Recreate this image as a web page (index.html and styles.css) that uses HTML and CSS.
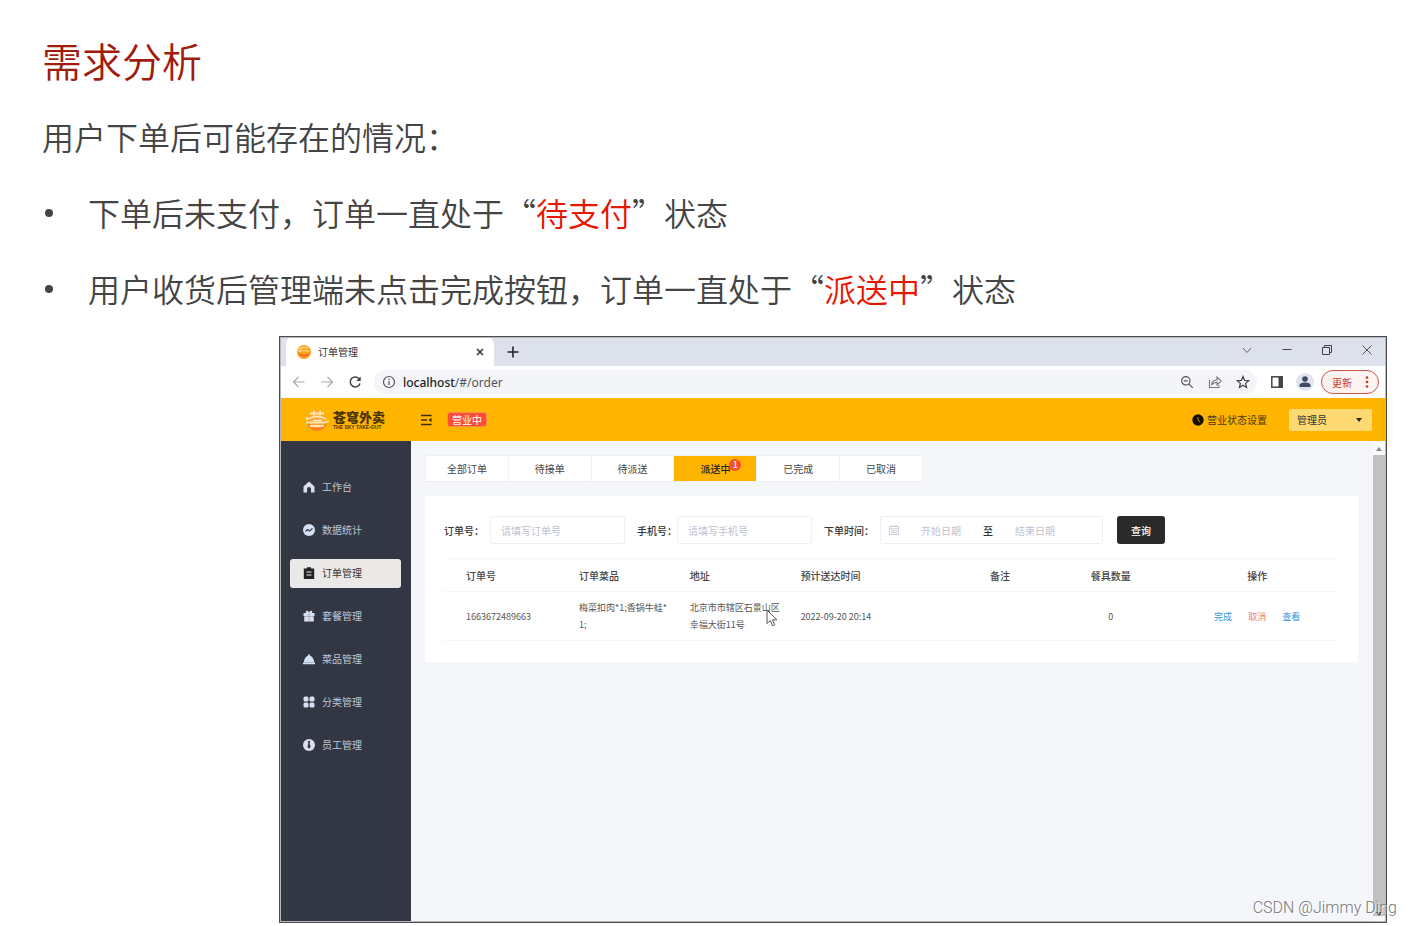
FILE: index.html
```html
<!DOCTYPE html>
<html lang="zh-CN">
<head>
<meta charset="utf-8">
<meta name="viewport" content="width=device-width, initial-scale=1">
<title>需求分析</title>
<link rel="stylesheet" href="styles.css">
</head>
<body>
<main class="slide">
  <h1 class="slide-title">需求分析</h1>
  <p class="slide-lead">用户下单后可能存在的情况：</p>
  <ul class="slide-points">
    <li>下单后未支付，订单一直处于“<em>待支付</em>”状态</li>
    <li>用户收货后管理端未点击完成按钮，订单一直处于“<em>派送中</em>”状态</li>
  </ul>

  <section class="browser">
    <div class="tabstrip">
      <div class="tab">
        <svg class="favicon" viewBox="0 0 14 14"><circle cx="7" cy="7" r="7" fill="#fba01f"/><path d="M2 4.500q5-4 9-1M1 6.500q6-2 11 0" stroke="#ffd27a" stroke-width="1.600" fill="none"/><path d="M2.500 9q4.500 3.500 9 0" stroke="#f4661b" stroke-width="1.600" fill="none"/></svg>
        <span class="tab-title">订单管理</span>
        <button class="icon-btn" aria-label="关闭标签页"><svg width="8" height="8" viewBox="0 0 8 8"><path d="M1 1l6 6M7 1L1 7" stroke="#333" stroke-width="1.500"/></svg></button>
      </div>
      <button class="icon-btn new-tab" aria-label="新标签页"><svg width="12" height="12" viewBox="0 0 12 12"><path d="M6 .5v11M.5 6h11" stroke="#222" stroke-width="1.600"/></svg></button>
      <div class="window-controls">
        <button class="icon-btn" aria-label="搜索标签页"><svg width="12" height="12" viewBox="0 0 12 12"><path d="M2 4l4 4.500L10 4" fill="none" stroke="#666"/></svg></button>
        <button class="icon-btn" aria-label="最小化"><svg width="12" height="12" viewBox="0 0 12 12"><path d="M1.500 5.500h9" stroke="#444"/></svg></button>
        <button class="icon-btn" aria-label="还原"><svg width="12" height="12" viewBox="0 0 12 12"><path d="M1.500 3.500h7v7h-7zM3.500 3.500v-2h7v7h-2" fill="none" stroke="#444"/></svg></button>
        <button class="icon-btn" aria-label="关闭"><svg width="12" height="12" viewBox="0 0 12 12"><path d="M1.500 1.500l9 9M10.500 1.500l-9 9" stroke="#555"/></svg></button>
      </div>
    </div>

    <div class="toolbar">
      <div class="nav-btns">
        <button class="icon-btn" aria-label="后退"><svg width="14" height="14" viewBox="0 0 14 14"><path d="M12.500 7H2M6.500 2L1.500 7l5 5" fill="none" stroke="#aaa" stroke-width="1.200"/></svg></button>
        <button class="icon-btn" aria-label="前进"><svg width="14" height="14" viewBox="0 0 14 14"><path d="M1.500 7H12M7.500 2l5 5-5 5" fill="none" stroke="#aaa" stroke-width="1.200"/></svg></button>
        <button class="icon-btn" aria-label="刷新"><svg width="14" height="14" viewBox="0 0 14 14"><path d="M11.300 4A5 5 0 1 0 12 8.500" fill="none" stroke="#444" stroke-width="1.500"/><path d="M12.700 1.500v4.500H8.200z" fill="#444"/></svg></button>
      </div>
      <div class="address">
        <svg width="14" height="14" viewBox="0 0 14 14"><circle cx="7" cy="7" r="5.500" fill="none" stroke="#555" stroke-width="1.200"/><path d="M7 6.200V10M7 3.800v1.300" stroke="#555" stroke-width="1.300"/></svg>
        <span class="url"><b>localhost</b>/#/order</span>
        <div class="address-actions">
          <button class="icon-btn" aria-label="缩放"><svg width="14" height="14" viewBox="0 0 14 14"><circle cx="5.800" cy="5.800" r="4.200" fill="none" stroke="#555" stroke-width="1.200"/><path d="M8.800 8.800l4 4M3.800 5.800h4" stroke="#555" stroke-width="1.200"/></svg></button>
          <button class="icon-btn" aria-label="分享"><svg width="14" height="14" viewBox="0 0 14 14"><path d="M1.500 5v7.500h9.500V10M3.500 10C4 6.500 6 5 9 5V2L13.300 6 9 10V7.200C6.500 7.200 5 8 3.500 10z" fill="none" stroke="#777" stroke-width="1.100"/></svg></button>
          <button class="icon-btn" aria-label="收藏"><svg width="14" height="14" viewBox="0 0 14 14"><path d="M7 1.500l1.600 3.900 4.200.3-3.200 2.700 1 4.100L7 10.300l-3.600 2.200 1-4.100L1.200 5.700l4.200-.3z" fill="none" stroke="#444" stroke-width="1.200"/></svg></button>
        </div>
      </div>
      <button class="icon-btn side-panel" aria-label="侧边栏"><svg width="14" height="14" viewBox="0 0 14 14"><rect x="1.800" y="1.800" width="10.400" height="10.400" fill="none" stroke="#444" stroke-width="1.500"/><path d="M8.500 2h4v10h-4z" fill="#444"/></svg></button>
      <button class="icon-btn avatar" aria-label="用户"><svg width="18" height="18" viewBox="0 0 18 18"><circle cx="9" cy="9" r="9" fill="#dfe4ee"/><circle cx="9" cy="6" r="2.800" fill="#3d4a63"/><path d="M3.500 14v-1.500q0-3 5.500-3t5.500 3V14z" fill="#3d4a63"/></svg></button>
      <button class="update">更新<svg width="4" height="12" viewBox="0 0 4 12" fill="#c5382c"><circle cx="2" cy="1.500" r="1.300"/><circle cx="2" cy="6" r="1.300"/><circle cx="2" cy="10.500" r="1.300"/></svg></button>
    </div>

    <header class="app-header">
      <div class="brand">
        <svg class="brand-mark" viewBox="0 0 24 22"><path d="M2 13a10 9 0 0 0 20 0z" fill="#ff7f24"/><circle cx="12" cy="10" r="9" fill="#ffa32e"/><path d="M5 4.500h14M9 1.500v5M15 1.500v5M3 10q9-5 18 0M1 13.500h18q4 0 4-2M5 17h14" stroke="#ffe6b0" stroke-width="1.900" fill="none"/><path d="M8 11.500h9" stroke="#fff6e0" stroke-width="1.400"/><circle cx="2" cy="9.500" r="1.300" fill="#fff1cf"/></svg>
        <div class="brand-text"><span class="brand-name">苍穹外卖</span><span class="brand-sub">THE SKY TAKE-OUT</span></div>
      </div>
      <button class="icon-btn" aria-label="折叠菜单"><svg width="12" height="12" viewBox="0 0 12 12"><path d="M1 1.500h10.500M1 6h6M1 10.500h10.500" stroke="#3c2c08" stroke-width="1.300"/><path d="M11.500 3.800v4.400L8.500 6z" fill="#3c2c08"/></svg></button>
      <span class="shop-state">营业中</span>
      <div class="header-right">
        <button class="state-setting"><svg width="12" height="12" viewBox="0 0 12 12"><circle cx="6" cy="6" r="5.700" fill="#151005"/><path d="M6 3v3.200L8.200 8" fill="none" stroke="#c28b09"/></svg>营业状态设置</button>
        <div class="account"><select aria-label="账号"><option>管理员</option></select><svg width="6" height="4" viewBox="0 0 6 4"><path d="M0 0h6L3 4z" fill="#2b2410"/></svg></div>
      </div>
    </header>

    <div class="app-body">
      <nav class="sidebar">
        <a href="#"><svg viewBox="0 0 12 12"><path d="M6 .5L.5 5.500V11.500H4V8q0-2 2-2t2 2v3.500h3.500v-6z"/></svg>工作台</a>
        <a href="#"><svg viewBox="0 0 12 12"><circle cx="6" cy="6" r="6"/><path d="M2.500 7.500l2-2 2 1.500 3-2.500" fill="none" stroke="#333744" stroke-width="1.100"/></svg>数据统计</a>
        <a href="#" class="active"><svg viewBox="0 0 12 12"><path d="M.8 1.500H4V.3h4v1.200h3.200V12H.8z"/><path d="M3.500 5h5M3.500 8h5" stroke="#eee"/></svg>订单管理</a>
        <a href="#"><svg viewBox="0 0 12 12"><path d="M.5 3H3Q2 .5 4 .8q1.500.2 2 1.700Q6.500 1 8 .8q2-.3 1 2.200h2.500v3H.5zM1.200 6.300h9.600v5.200H1.200z"/><path d="M6 3v8.500" stroke="#9ba5b8" stroke-width=".8"/></svg>套餐管理</a>
        <a href="#"><svg viewBox="0 0 12 12"><path d="M0 9.500h12v1.800H0zM.8 9.200Q1.500 4 5 2.800q-.3-1.500 1-1.500t1 1.500Q10.500 4 11.200 9.200z"/></svg>菜品管理</a>
        <a href="#"><svg viewBox="0 0 12 12"><rect x=".5" y=".5" width="5" height="5" rx="1.500"/><rect x="6.500" y=".5" width="5" height="5" rx="1.500"/><rect x=".5" y="6.500" width="5" height="5" rx="1.500"/><rect x="6.500" y="6.500" width="5" height="5" rx="1.500"/></svg>分类管理</a>
        <a href="#"><svg viewBox="0 0 12 12"><circle cx="6" cy="6" r="6"/><path d="M4.800 2h2.400L6.700 4l.8 4L6 9.800 4.500 8l.8-4z" fill="#333744"/></svg>员工管理</a>
      </nav>

      <div class="content">
        <div class="order-tabs">
          <button>全部订单</button><button>待接单</button><button>待派送</button><button class="active">派送中<span class="count">1</span></button><button>已完成</button><button>已取消</button>
        </div>
        <div class="panel">
          <form class="filters">
            <label for="order-no">订单号：</label>
            <input class="field" id="order-no" type="text" placeholder="请填写订单号">
            <label for="phone" class="tight">手机号：</label>
            <input class="field" id="phone" type="text" placeholder="请填写手机号">
            <label for="start">下单时间：</label>
            <div class="range">
              <svg width="10" height="10" viewBox="0 0 10 10"><path d="M.5 1.500h9v8h-9zM.5 3.800h9M3 0v2M7 0v2M2 5.800h6M2 7.600h6" fill="none" stroke="#c3c6d6" stroke-width=".9"/></svg>
              <input id="start" type="text" placeholder="开始日期">
              <span>至</span>
              <input type="text" aria-label="结束日期" placeholder="结束日期">
            </div>
            <button type="button" class="query">查询</button>
          </form>
          <table class="orders">
            <colgroup><col class="c-no"><col class="c-std"><col class="c-std"><col class="c-time"><col class="c-std"><col class="c-std"><col></colgroup>
            <thead><tr><th>订单号</th><th>订单菜品</th><th>地址</th><th>预计送达时间</th><th class="mid">备注</th><th class="mid">餐具数量</th><th class="ops">操作</th></tr></thead>
            <tbody><tr><td>1663672489663</td><td>梅菜扣肉*1;香锅牛蛙*<br>1;</td><td><span class="addr">北京市市辖区石景山区幸福大街11号<svg class="pointer" viewBox="0 0 12 18"><path d="M1 1v13.500l3.300-3 2.200 5.300 2.200-1-2.200-5H11z" fill="#fff" stroke="#555"/></svg></span></td><td>2022-09-20 20:14</td><td></td><td class="mid">0</td><td class="ops"><a href="#">完成</a><a href="#" class="danger">取消</a><a href="#">查看</a></td></tr></tbody>
          </table>
        </div>
      </div>

      <div class="scrollbar">
        <svg width="6" height="4" viewBox="0 0 6 4"><path d="M0 4h6L3 0z" fill="#888"/></svg>
        <div class="thumb"><svg width="6" height="4" viewBox="0 0 6 4"><path d="M0 0h6L3 4z" fill="#444"/></svg></div>
      </div>
    </div>
  </section>
</main>
<div class="watermark">CSDN @Jimmy Ding</div>
</body>
</html>
```
FILE: styles.css
```css
* { box-sizing: border-box; }

body {
  margin: 0;
  position: relative;
  background: #fff;
  font-family: "Noto Sans CJK SC", "Liberation Sans", sans-serif;
  font-size: 10px;
  color: #333;
}

button, input, select { font: inherit; color: inherit; border: 0; padding: 0; margin: 0; background: none; }
a { text-decoration: none; }
svg { display: block; flex: none; }

/* Slide */
.slide {
  display: flex;
  flex-direction: column;
  min-height: 100vh;
  padding: 22px 25px 3px 42px;
}
.slide-title { margin: 0; font-size: 40px; font-weight: 350; line-height: 76px; color: #a01c0c; }
.slide-lead { margin: 0; font-size: 32px; font-weight: 350; line-height: 76px; color: #444; }
.slide-points { margin: 0 0 10px; padding: 0; list-style: none; font-size: 32px; font-weight: 350; line-height: 76px; color: #444; }
.slide-points li { display: flex; align-items: center; white-space: pre; }
.slide-points li::before { content: ""; width: 8px; height: 8px; margin: 2px 35px 0 3px; border-radius: 50%; background: #444; }
.slide-points em { font-style: normal; color: #e81500; }

/* Browser window */
.browser {
  flex: 1;
  display: flex;
  flex-direction: column;
  margin-left: 237px;
  border: 1px solid #4c4c50;
  outline: 1px solid #b8b8ba;
  outline-offset: -2px;
  background: #fff;
}
.icon-btn { display: inline-flex; align-items: center; justify-content: center; }
.tabstrip { display: flex; align-items: center; height: 29px; padding: 0 13px 0 6px; background: #dde1ec; }
.tab {
  display: flex;
  align-items: center;
  width: 208px;
  height: 29px;
  padding: 0 10px 0 11px;
  border-radius: 7px 7px 0 0;
  background: #fff;
}
.favicon { width: 14px; height: 14px; margin-right: 7px; }
.tab-title { flex: 1; font-size: 10px; }
.new-tab { margin-left: 13px; }
.window-controls { display: flex; gap: 28px; margin-left: auto; padding-bottom: 4px; }

.toolbar { display: flex; align-items: center; height: 32px; padding: 0 7px 0 12px; }
.nav-btns { display: flex; gap: 14px; width: 82px; }
.address { flex: 1; display: flex; align-items: center; gap: 7px; height: 24px; padding: 0 7px 0 8px; border-radius: 12px; background: #f3f5f8; }
.url { font-family: "Noto Sans", "Open Sans", sans-serif; font-size: 12px; color: #555; }
.url b { font-weight: 500; color: #222; }
.address-actions { display: flex; gap: 14px; margin-left: auto; }
.side-panel { margin-left: 13px; }
.avatar { margin: 0 7px 0 12px; }
.update {
  display: flex;
  align-items: center;
  justify-content: space-between;
  width: 58px;
  height: 24px;
  padding: 0 9px 0 10px;
  border: 1px solid #c5574c;
  border-radius: 12px;
  background: #fdf3f1;
  color: #c5382c;
}

/* Application header */
.app-header { display: flex; align-items: center; height: 43px; padding: 0 14px 0 25px; background: #ffb500; color: #4a3708; }
.brand { display: flex; align-items: center; gap: 4px; width: 115px; }
.brand-mark { width: 24px; height: 22px; }
.brand-text { display: flex; flex-direction: column; color: #4a3505; }
.brand-name { font-size: 13px; font-weight: 900; line-height: 15px; }
.brand-sub { font-family: "Liberation Sans", sans-serif; font-size: 5px; font-weight: 700; line-height: 7px; white-space: nowrap; }
.shop-state { margin-left: 15px; padding: 0 4px; border: 1px solid #ff8f50; border-radius: 3px; line-height: 13px; background: #fb4e34; color: #fff; }
.header-right { display: flex; align-items: center; gap: 22px; margin-left: auto; }
.state-setting { display: flex; align-items: center; gap: 3px; }
.account { display: flex; align-items: center; position: relative; width: 83px; height: 22px; border-radius: 2px; background: #ffda72; color: #333; }
.account select { appearance: none; width: 100%; height: 100%; padding: 0 8px; }
.account svg { position: absolute; right: 10px; pointer-events: none; }

/* Sidebar */
.app-body { flex: 1; display: flex; }
.sidebar { display: flex; flex-direction: column; gap: 14px; width: 131px; padding: 32px 10px; background: #333744; }
.sidebar a { display: flex; align-items: center; gap: 7px; height: 29px; padding: 0 0 2px 13px; border-radius: 3px; color: #bfc7d6; }
.sidebar svg { width: 12px; height: 12px; fill: #d5e0f2; }
.sidebar .active { background: #ebe9e8; color: #333; }
.sidebar .active svg { fill: #222; }

/* Content */
.content { flex: 1; min-width: 0; padding: 14px; background: #f5f6f9; }
.order-tabs { display: flex; width: 498px; margin-bottom: 14px; border: 1px solid #eff0f3; background: #fff; }
.order-tabs button { flex: 1; position: relative; height: 25px; border-right: 1px solid #f1f2f4; color: #444; }
.order-tabs button:last-child { border-right: 0; }
.order-tabs .active { background: #ffb500; font-weight: 500; color: #222; }
.count {
  position: absolute;
  top: 3px;
  right: 15px;
  width: 12px;
  height: 12px;
  border-radius: 50%;
  background: #fb4e2c;
  color: #fff;
  font-size: 9px;
  line-height: 12px;
}
.panel { padding: 20px 20px 21px 19px; background: #fff; }
.filters { display: flex; align-items: center; margin-bottom: 15px; }
.filters label { margin-right: 6px; font-weight: 500; white-space: nowrap; }
.filters label.tight { margin-right: 0; }
.field { width: 135px; height: 28px; margin-right: 12px; padding: 0 10px; border: 1px solid #f0f0f4; border-radius: 2px; }
.range { display: flex; align-items: center; gap: 4px; width: 223px; height: 28px; margin-right: 14px; padding: 0 8px; border: 1px solid #f0f0f4; border-radius: 2px; }
.range input { width: 76px; text-align: center; }
.range span { font-weight: 500; }
input::placeholder { color: #c0c2d2; opacity: 1; }
.query { width: 48px; height: 28px; border-radius: 3px; background: #2a2a2a; color: #fff; font-weight: 500; }

.orders { width: 100%; table-layout: fixed; border-collapse: collapse; border-top: 1px solid #fafafc; font-size: 9px; line-height: 17px; color: #555; }
.c-no { width: 14.2%; }
.c-std { width: 12.4%; }
.c-time { width: 17%; }
.orders th, .orders td { padding: 7px 8px; border-bottom: 1px solid #f6f6f9; text-align: left; }
.orders th { font-size: 10px; font-weight: 500; color: #444; }
.orders th:first-child, .orders td:first-child { padding-left: 22px; }
.orders .mid { text-align: center; }
.orders .ops { padding: 7px 0 7px 10px; text-align: center; }
.ops a { margin: 0 8px; color: #2f94dc; }
.ops .danger { color: #e8816f; }
.addr { display: block; position: relative; }
.pointer { position: absolute; left: 76px; top: 10px; width: 12px; height: 18px; }

.scrollbar { display: flex; flex-direction: column; align-items: center; width: 14px; padding: 6px 1px 6px 0; gap: 4px; background: #f8f8f9; }
.thumb { flex: 1; display: flex; align-items: flex-end; justify-content: center; width: 12px; background: #c1c1c1; }

.watermark {
  position: absolute;
  right: 15px;
  bottom: 7px;
  font-family: Roboto, sans-serif;
  font-size: 16px;
  font-weight: 300;
  line-height: 22px;
  color: #77777a;
  text-shadow: 1px 1px 0 #fff;
}
```
